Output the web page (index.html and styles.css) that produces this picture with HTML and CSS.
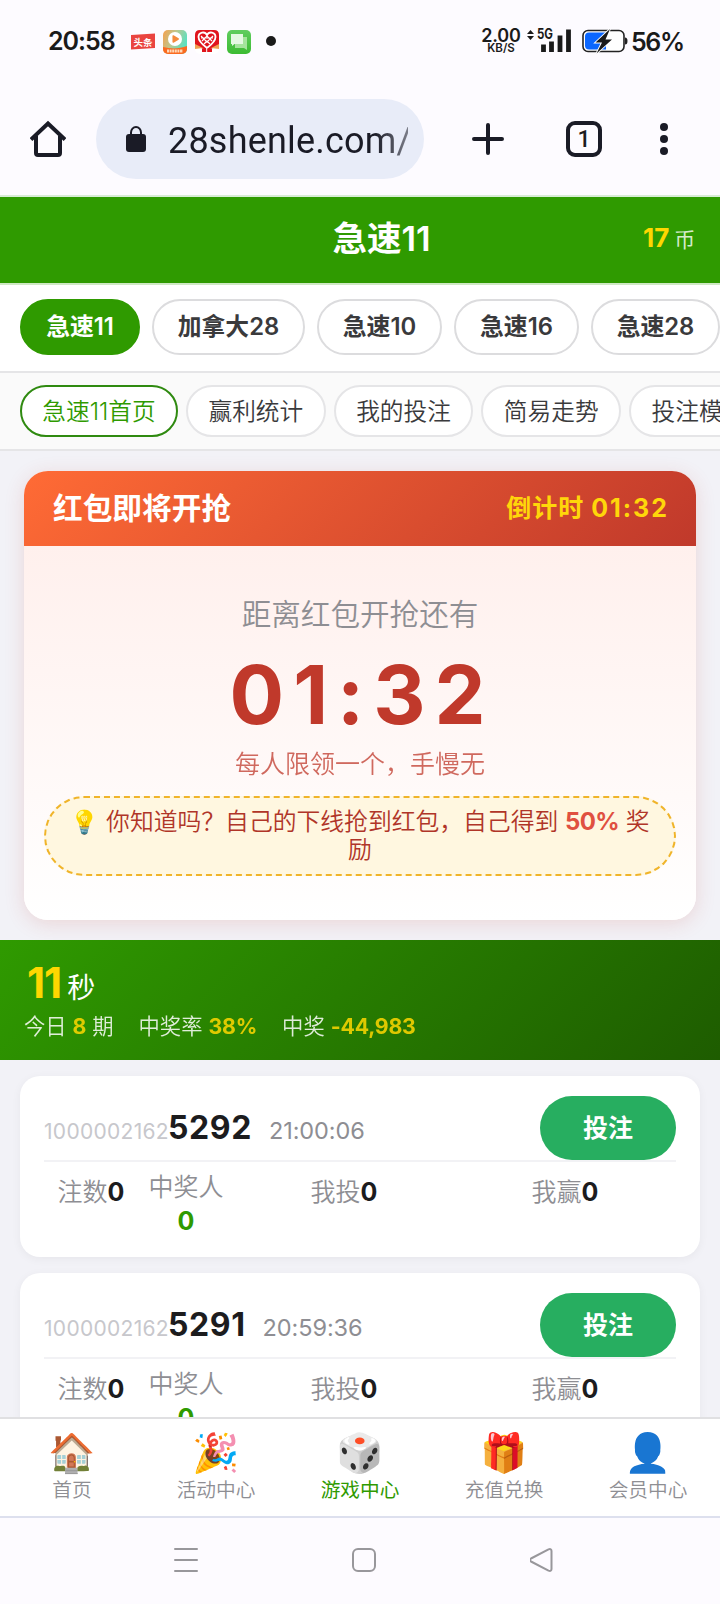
FILE: index.html
```html
<!DOCTYPE html>
<html lang="zh-CN">
<head>
<meta charset="utf-8">
<title>急速11</title>
<link rel="stylesheet" href="styles.css">
</head>
<body>
<div class="phone">
  <header class="status">
    <span class="clock">20:58</span>
    <div class="notices">
      <svg width="26" height="24" viewBox="0 0 26 24"><path d="M1 5 25 3.500V18L1 19.500z" fill="#ea4440"/><text class="mini-label" x="13" y="15.500" text-anchor="middle" textLength="19">头条</text></svg>
      <svg width="24" height="24" viewBox="0 0 24 24"><defs><linearGradient id="play" x1="0" y1="0" x2="1" y2=".4"><stop offset="0" stop-color="#f8a04c"/><stop offset=".5" stop-color="#bcc78f"/><stop offset="1" stop-color="#5ce0c0"/></linearGradient><clipPath id="round"><rect width="24" height="24" rx="5"/></clipPath></defs><g clip-path="url(#round)"><rect width="24" height="24" fill="url(#play)"/><path d="M0 17c8 2 16 2 24-1v8H0z" fill="#fb6a20"/></g><circle cx="12" cy="9" r="7" fill="#fff"/><path d="M10.200 6v6l5-3z" fill="#f58a3c" stroke="#f58a3c" stroke-width="1.500" stroke-linejoin="round"/><path d="M4 21h16" stroke="#ffd9b8" stroke-width="3" stroke-dasharray="2 .6"/></svg>
      <svg width="24" height="24" viewBox="0 0 24 24"><rect width="24" height="24" rx="5" fill="#fff"/><path d="M0 16V5q0-5 5-5h14q5 0 5 5v11l-12 4z" fill="#e0141c"/><path d="M12 18C6 13.500 3.500 10.500 3.500 7c0-5 6.500-6 8.500-2 2-4 8.500-3 8.500 2 0 3.500-2.500 6.500-8.500 11z" fill="none" stroke="#fff" stroke-width="1.800"/><path d="M6 6l3 3 3-3 3 3 3-3M7 11l2-2 3 3 3-3 2 2M9 14l3-3 3 3M6 8h12" fill="none" stroke="#fff" stroke-width="1.200"/><path d="M0 14l8 4-8 1zM24 14l-8 4 8 1z" fill="#f0a050"/><path d="M7 18.500h10V22H7z" fill="#e0141c"/><path d="M11.700 18v4" stroke="#fff"/></svg>
      <svg width="24" height="24" viewBox="0 0 24 24"><defs><linearGradient id="chat" x2="0" y2="1"><stop stop-color="#61cd60"/><stop offset="1" stop-color="#3cbb32"/></linearGradient></defs><rect width="24" height="24" rx="5" fill="url(#chat)"/><path d="M8 7h12v13l-3-2H8z" fill="#a5e49d"/><path d="M4 4h12v10H7.500L5 16v-2H4z" fill="#e5f8e3"/></svg>
    </div>
    <i class="dot"></i>
    <div class="net"><b>2.00</b><span>KB/S</span></div>
    <svg class="signal" width="46" height="26" viewBox="0 0 46 26"><path d="M0 8 3.500 4 7 8zM0 10h7l-3.500 4z" fill="#1a1a1a"/><text class="fiveg" x="10" y="13" textLength="16" lengthAdjust="spacingAndGlyphs">5G</text><path d="M16.500 26v-8M24.500 26V15M33 26V9M41.500 26V3" transform="translate(0 .5)" stroke="#1a1a1a" stroke-width="4.800"/></svg>
    <svg class="battery" width="46" height="26" viewBox="0 0 46 26"><rect x="1" y="2.500" width="41" height="21" rx="5" fill="#fff" stroke="#222" stroke-width="1.600"/><path d="M7 4.500h17v17H7q-4 0-4-4v-9q0-4 4-4z" fill="#0a66ff"/><path d="M43 9.500q2.500 0 2.500 3.500t-2.500 3.500z" fill="#222"/><path d="M28 1 13.500 14.500h6.500L14.500 25.500 30 11.500H23.500z" fill="#1a1a1a" stroke="#fff" stroke-width="1.800" paint-order="stroke"/></svg>
    <span class="percent">56%</span>
  </header>

  <nav class="browser">
    <svg class="home" width="36" height="38" viewBox="0 0 36 38" fill="none" stroke="#1a1b26" stroke-width="4"><path d="M1 19.500 18 3.500l17 16" stroke-linejoin="miter"/><path d="M6 16v17q0 2 2 2h20q2 0 2-2V16"/></svg>
    <div class="address">
      <svg width="20" height="28" viewBox="0 0 20 28"><rect y="9" width="20" height="18" rx="3" fill="#1a1b26"/><path d="M5 10V7.500a5 5.500 0 0 1 10 0V10" fill="none" stroke="#1a1b26" stroke-width="2"/></svg>
      <span class="url">28shenle.com/</span>
    </div>
    <svg class="plus" width="32" height="32" viewBox="0 0 32 32"><path d="M16 2v28M2 16h28" stroke="#1a1b26" stroke-width="4" stroke-linecap="round"/></svg>
    <span class="count">1</span>
    <svg class="more" width="8" height="32" viewBox="0 0 8 32" fill="#1a1b26"><circle cx="4" cy="4" r="4"/><circle cx="4" cy="16" r="4"/><circle cx="4" cy="28" r="4"/></svg>
  </nav>

  <main class="page">
    <div class="titlebar"><h1>急速11</h1><p class="coins"><b>17</b>币</p></div>
    <div class="games">
      <a class="game on">急速11</a><a class="game wide">加拿大28</a><a class="game">急速10</a><a class="game">急速16</a><a class="game last">急速28</a>
    </div>
    <div class="subs">
      <a class="sub on">急速11首页</a><a class="sub">赢利统计</a><a class="sub">我的投注</a><a class="sub">简易走势</a><a class="sub">投注模式</a>
    </div>

    <section class="packet">
      <div class="packet-head"><h2>红包即将开抢</h2><span>倒计时 <em>01:32</em></span></div>
      <div class="packet-body">
        <p class="lead">距离红包开抢还有</p>
        <p class="timer">01:32</p>
        <p class="limit">每人限领一个，手慢无</p>
        <p class="tip"><span class="bulb">💡</span> 你知道吗？自己的下线抢到红包，自己得到 <b>50%</b> 奖励</p>
      </div>
    </section>

    <section class="summary">
      <p class="left"><b>11</b>秒</p>
      <p class="totals"><span>今日 <b>8</b> 期</span><span>中奖率 <b>38%</b></span><span>中奖 <b>-44,983</b></span></p>
    </section>

    <section class="rounds">
      <article class="round">
        <div class="round-top"><span class="prefix">1000002162</span><b class="number">5292</b><time>21:00:06</time><button class="bet">投注</button></div>
        <div class="stats"><span>注数<b>0</b></span><span class="win">中奖人<b>0</b></span><span>我投<b>0</b></span><span>我赢<b>0</b></span></div>
      </article>
      <article class="round">
        <div class="round-top"><span class="prefix">1000002162</span><b class="number">5291</b><time>20:59:36</time><button class="bet">投注</button></div>
        <div class="stats"><span>注数<b>0</b></span><span class="win">中奖人<b>0</b></span><span>我投<b>0</b></span><span>我赢<b>0</b></span></div>
      </article>
    </section>
  </main>

  <nav class="tabs">
    <a><i>🏠</i>首页</a><a><i>🎉</i>活动中心</a><a class="on"><i>🎲</i>游戏中心</a><a><i>🎁</i>充值兑换</a><a><i>👤</i>会员中心</a>
  </nav>
  <footer class="system">
    <svg width="24" height="26" viewBox="0 0 24 26" stroke="#98979b" stroke-width="2" stroke-linecap="round"><path d="M1 2h22M1 13h22M1 24h22"/></svg>
    <svg width="24" height="26" viewBox="0 0 24 26" fill="none" stroke="#98979b" stroke-width="2"><rect x="1" y="2" width="22" height="22" rx="5"/></svg>
    <svg width="24" height="26" viewBox="0 0 24 26" fill="none" stroke="#98979b" stroke-width="2" stroke-linejoin="round"><path d="M1 11.500 18.500 2.400q3-1 3 1.600v18q0 2.600-3 1.600L1 14.500q-2-1.500 0-3z"/></svg>
  </footer>
</div>
</body>
</html>
```

FILE: styles.css
```css
* { box-sizing: border-box; }
body, p, h1, h2 { margin: 0; }
body { background: #fdfbff; font-family: Inter, "Noto Sans CJK SC", sans-serif; color: #1c1c1e; }
a, i, em { font-style: normal; }
b { font-weight: 700; }
.phone { width: 720px; height: 1604px; display: flex; flex-direction: column; overflow: hidden; }

.status { height: 82px; flex: none; display: flex; align-items: center; padding: 0 0 0 48px; color: #1a1a1a; }
.clock { flex: none; width: 82px; font-size: 25px; font-weight: 600; letter-spacing: -1px; }
.notices { flex: none; display: flex; gap: 8px; width: 121px; margin: 2px 0 0; }
.notices svg { flex: none; }
.notices svg:first-child { margin-right: -1px; }
.mini-label { font: 700 9.500px "Noto Sans CJK SC", sans-serif; fill: #fff; }
.dot { flex: none; width: 10px; height: 10px; border-radius: 50%; background: #1a1a1a; margin-left: 15px; }
.net { flex: none; width: 40px; margin-left: 205px; display: flex; flex-direction: column; align-items: center; line-height: 12px; }
.net b { font-size: 18px; font-weight: 600; line-height: 13px; letter-spacing: -.2px; }
.net span { font-size: 11.500px; font-weight: 600; line-height: 12px; }
.signal { flex: none; margin: -4px 0 0 6px; }
.fiveg { font: 700 14px Inter, sans-serif; fill: #1a1a1a; }
.battery { flex: none; margin-left: 9px; }
.percent { flex: none; margin: 2px 0 0 3px; font-size: 25px; font-weight: 600; letter-spacing: -1.400px; white-space: nowrap; }

.browser { height: 115px; flex: none; display: flex; align-items: center; padding: 0 52px 0 30px; border-bottom: 2px solid #d8ecd6; }
.address { width: 328px; height: 80px; margin-left: 30px; border-radius: 40px; background: #e8ecf8; display: flex; align-items: center; padding-left: 30px; }
.url { width: 240px; margin-left: 22px; padding-top: 4px; overflow: hidden; font: 36px Roboto, sans-serif; letter-spacing: .2px; white-space: nowrap; color: #1a1b26; -webkit-mask-image: linear-gradient(90deg, #000 86%, #0008); mask-image: linear-gradient(90deg, #000 86%, #0008); }
.plus { margin-left: 48px; }
.count { width: 36px; height: 36px; margin-left: 62px; border: 4px solid #1a1b26; border-radius: 9px; font: 500 23px/30px Roboto, sans-serif; text-align: center; }
.more { margin-left: 58px; }

.page { height: 1220px; flex: none; overflow: hidden; background: #f2f2f7; }
.titlebar { height: 88px; padding-top: 4px; background: #2f9a00; border-bottom: 2px solid #cfe8c4; display: grid; grid-template-columns: 120px 1fr 96px; align-items: center; color: #fff; }
.titlebar h1 { grid-column: 2; padding-left: 19px; margin-top: -6px; font-size: 34.500px; font-weight: 600; line-height: 48px; text-align: center; }
.coins { font-size: 21px; margin-top: -10px; white-space: nowrap; color: #d5ebcc; padding-left: 19px; }
.coins b { font-size: 26px; letter-spacing: 0; color: #ffd700; margin-right: 5px; }
.games { height: 88px; padding: 14px 20px 0; display: flex; gap: 12px; background: #fff; border-bottom: 2px solid #e5e5e7; }
.game { flex: 0 0 125px; height: 56px; border: 2px solid #dcdcde; border-radius: 28px; font-size: 23.800px; font-weight: 600; line-height: 52px; text-align: center; color: #3a3a3c; white-space: nowrap; }
.game.on { flex-basis: 120px; background: #2f9a00; border-color: #2f9a00; color: #fff; }
.game.wide { flex-basis: 153px; }
.game.last { flex-basis: 129px; }
.subs { height: 78px; padding: 12px 20px 0; display: flex; gap: 8px; overflow: hidden; background: #fafafa; border-bottom: 2px solid #e5e5e7; }
.sub { flex: 0 0 139.700px; height: 52px; border: 2px solid #e5e5e7; border-radius: 26px; background: #fff; font-size: 23.700px; font-weight: 350; line-height: 49px; text-align: center; color: #3a3a3c; white-space: nowrap; }
.sub.on { flex-basis: 158px; border-color: #2f8a10; color: #2f9a00; }

.packet { height: 449px; margin: 20px 24px 0; border-radius: 24px; overflow: hidden; box-shadow: 0 4px 20px #c0392b26; background: #fff; }
.packet-head { height: 75px; padding: 0 27px 0 29px; display: flex; align-items: center; justify-content: space-between; background: linear-gradient(135deg, #ff6b35, #c0392b); color: #fff; }
.packet-head h2 { font-size: 29.700px; line-height: 40px; margin-top: -1px; }
.packet-head span { font-size: 25px; line-height: 40px; margin-top: -1px; font-weight: 700; color: #ffd60a; letter-spacing: 1px; }
.packet-head em { letter-spacing: 2px; }
.packet-body { height: 374px; padding: 44px 20px 0; background: linear-gradient(#fff0ed, #fff); text-align: center; }
.lead { font-size: 29.600px; font-weight: 350; line-height: 48px; color: #8e8e93; }
.timer { font-size: 81px; font-weight: 700; line-height: 98px; margin-top: 8px; padding-left: 4px; letter-spacing: 9px; color: #c0392b; }
.limit { font-size: 25px; font-weight: 350; line-height: 36px; margin-top: 2px; color: #c0392b; opacity: .75; }
.tip { height: 80px; margin-top: 14px; padding: 10px 20px; border: 2px dashed #f0b429; border-radius: 40px; background: #fff7e0; font-size: 23.800px; font-weight: 350; line-height: 28px; color: #b03528; }
.tip b { font-size: 24px; color: #e05040; letter-spacing: -.6px; }
.bulb { font-size: 23px; }

.summary { height: 120px; margin-top: 20px; padding: 18px 24px 0; background: linear-gradient(135deg, #2f9a00, #1e5c00); color: #fff; }
.left { height: 50px; font-size: 28px; line-height: 50px; padding-left: 3px; }
.left b { font-size: 42px; letter-spacing: -1px; color: #ffd700; margin-right: 6px; }
.totals { display: flex; gap: 25px; margin-top: 3px; font-size: 21.300px; font-weight: 350; line-height: 30px; opacity: .85; white-space: nowrap; }
.totals b { color: #ffd700; letter-spacing: -.2px; }

.rounds { padding: 16px 20px 0; display: flex; flex-direction: column; gap: 16px; }
.round { height: 181px; padding: 20px 24px 0; border-radius: 20px; background: #fff; box-shadow: 0 2px 10px #0000000d; }
.round-top { height: 66px; display: flex; align-items: baseline; border-bottom: 2px solid #f2f2f5; white-space: nowrap; }
.prefix { width: 124px; font-size: 21px; letter-spacing: .3px; color: #c7c7cc; font-weight: 400; }
.number { font-size: 32px; letter-spacing: .6px; line-height: 64px; }
time { margin-left: 17px; font-size: 23.500px; color: #8e8e93; font-weight: 400; letter-spacing: -.1px; }
.bet { width: 136px; height: 64px; margin-left: auto; align-self: flex-start; border: 0; border-radius: 32px; padding: 0 0 4px; background: #27ae60; color: #fff; font: 700 25px "Noto Sans CJK SC", sans-serif; }
.stats { display: grid; grid-template-columns: 94px 96px 220px 222px; padding-top: 8px; font-size: 25px; font-weight: 350; line-height: 45px; text-align: center; color: #8e8e93; }
.stats b { color: #1c1c1e; }
.stats .win { line-height: 34px; }
.stats .win b { display: block; color: #2f9a00; }

.tabs { height: 101px; flex: none; display: grid; grid-template-columns: repeat(5, 1fr); background: #fff; border-top: 2px solid #e0e0e2; border-bottom: 2px solid #dde0ee; }
.tabs a { padding-top: 9px; display: flex; flex-direction: column; align-items: center; font-size: 19.700px; font-weight: 350; line-height: 29px; color: #8e8e93; }
.tabs .on { color: #2f9a00; font-weight: 400; }
.tabs i { height: 48px; margin-right: 1px; font-size: 38px; line-height: 48px; }
.system { flex: 1; display: flex; gap: 154px; padding: 29px 0 0 174px; }
```
